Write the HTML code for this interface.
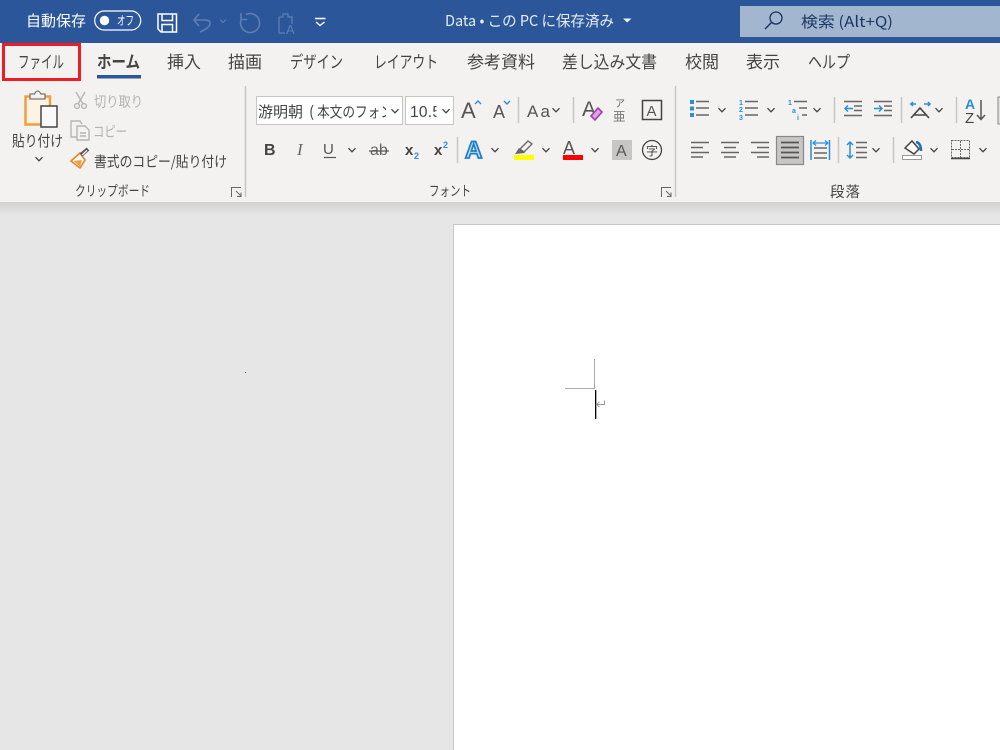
<!DOCTYPE html>
<html lang="ja"><head><meta charset="utf-8"><title>Word</title>
<style>
html,body{margin:0;padding:0;width:1000px;height:750px;overflow:hidden;background:#e6e6e6}
svg{display:block}
text{font-family:"Liberation Sans","Noto Sans CJK JP",sans-serif;fill:#444}
.j{font-family:"Noto Sans CJK JP","Liberation Sans",sans-serif}
.sep{stroke:#c8c6c4;stroke-width:1.5}
</style></head><body>
<svg width="1000" height="750" viewBox="0 0 1000 750" xmlns="http://www.w3.org/2000/svg">
<defs>
<linearGradient id="sh" x1="0" y1="0" x2="0" y2="1"><stop offset="0" stop-color="#d2d1cf"/><stop offset="1" stop-color="#e6e6e6"/></linearGradient>
<path id="ch" d="M-3.5 -1.8L0 1.8L3.5 -1.8" fill="none" stroke="#444" stroke-width="1.3"/>
<clipPath id="fc"><rect x="257" y="97" width="129" height="27"/></clipPath>
</defs>
<rect width="1000" height="750" fill="#e6e6e6"/>
<!-- title bar -->
<rect width="1000" height="43" fill="#2b579a"/>
<text class="j" x="26" y="26" font-size="15" textLength="60" lengthAdjust="spacingAndGlyphs" style="fill:#fff">自動保存</text>
<rect x="94.700" y="11" width="46" height="19" rx="9.500" fill="none" stroke="#fff" stroke-width="1.200"/>
<circle cx="104.500" cy="20.500" r="4.700" fill="#fff"/>
<text class="j" x="117" y="25" font-size="12.500" textLength="17" lengthAdjust="spacingAndGlyphs" style="fill:#fff">オフ</text>
<g fill="none" stroke="#fff" stroke-width="1.500"><path d="M158 14H176.500V32H161L158 29Z"/><path d="M162 14V20.500H172.500V14"/><path d="M162 32V24.500H172.500V32"/></g>
<g fill="none" stroke="#5e7fb0" stroke-width="1.600"><path d="M199 14L194 20L199 26M194 20H203C212 19 214 26 200 32"/><path d="M220 19.500L223 22.500L226 19.500" stroke-width="1.200"/><path d="M246 14.500A9.500 9.500 0 1 1 241.500 19M241 13V19.500H247"/><path d="M279 17H283V14H288V17H292V24M279 17V33H285" stroke-width="1.300"/></g>
<text x="286" y="34" font-size="13" style="fill:#5e7fb0">A</text>
<g fill="none" stroke="#fff" stroke-width="1.400"><path d="M315 18.500H325.500M316 22L320 25.500L324.500 22"/></g>
<text class="j" x="445" y="26" font-size="15" textLength="169" lengthAdjust="spacingAndGlyphs" style="fill:#e6ecf5">Data • この PC に保存済み</text>
<path d="M623 18.500H631.500L627.200 22.500Z" fill="#eef2f8"/>
<rect x="740" y="6" width="260" height="31" fill="#a2b6d0"/>
<circle cx="776" cy="18" r="6" fill="none" stroke="#17335f" stroke-width="1.300"/><path d="M771.500 22.500L765 29" stroke="#17335f" stroke-width="1.400"/>
<text class="j" x="801" y="27" font-size="15" textLength="92" lengthAdjust="spacingAndGlyphs" style="fill:#1c3864">検索 (Alt+Q)</text>
<!-- ribbon -->
<rect y="43" width="1000" height="159" fill="#f3f2f1"/>
<rect y="202" width="1000" height="13" fill="url(#sh)"/>
<g font-size="17">
<text class="j" x="18" y="68" textLength="46" lengthAdjust="spacingAndGlyphs">ファイル</text>
<text class="j" x="97" y="68" font-weight="700" textLength="43" lengthAdjust="spacingAndGlyphs">ホーム</text>
<text class="j" x="167" y="68" textLength="34" lengthAdjust="spacingAndGlyphs">挿入</text>
<text class="j" x="228" y="68" textLength="34" lengthAdjust="spacingAndGlyphs">描画</text>
<text class="j" x="290" y="68" textLength="53" lengthAdjust="spacingAndGlyphs">デザイン</text>
<text class="j" x="374" y="68" textLength="64" lengthAdjust="spacingAndGlyphs">レイアウト</text>
<text class="j" x="467" y="68" textLength="68" lengthAdjust="spacingAndGlyphs">参考資料</text>
<text class="j" x="562" y="68" textLength="95" lengthAdjust="spacingAndGlyphs">差し込み文書</text>
<text class="j" x="685" y="68" textLength="34" lengthAdjust="spacingAndGlyphs">校閲</text>
<text class="j" x="746" y="68" textLength="34" lengthAdjust="spacingAndGlyphs">表示</text>
<text class="j" x="808" y="68" textLength="42" lengthAdjust="spacingAndGlyphs">ヘルプ</text>
</g>
<rect x="97" y="75" width="44" height="3.500" fill="#2b579a"/>
<rect x="3.500" y="44.500" width="76" height="35" fill="none" stroke="#ee1c25" stroke-width="3"/>
<!-- clipboard group -->
<rect x="25.500" y="96.500" width="24.500" height="28" fill="#fdf3e3" stroke="#ef9f3d" stroke-width="2.500"/>
<path d="M30 99V94H34.500Q37.500 88 41 94H45V99Z" fill="#f3f2f1" stroke="#777" stroke-width="1.300"/>
<rect x="41" y="106" width="16" height="21" fill="#f9f9f9" stroke="#444" stroke-width="1.500"/>
<text class="j" x="12" y="146" font-size="15" textLength="51" lengthAdjust="spacingAndGlyphs">貼り付け</text>
<use href="#ch" x="39" y="159"/>
<g fill="none" stroke="#b5b5b5" stroke-width="1.400"><path d="M76 92L83 104M85 92L78 104"/><circle cx="77" cy="106" r="2.400"/><circle cx="84" cy="106" r="2.400"/>
<path d="M77 137H71V121H80L82 124"/><path d="M77 126H85L89 130V140H77Z"/><path d="M80 133H86M80 136H86"/></g>
<text class="j" x="94" y="107" font-size="14.500" textLength="49" lengthAdjust="spacingAndGlyphs" style="fill:#b3b3b3">切り取り</text>
<text class="j" x="93" y="137" font-size="14.500" textLength="34" lengthAdjust="spacingAndGlyphs" style="fill:#b3b3b3">コピー</text>
<path d="M71 161L80 153L85 160L80 168Z" fill="#fff" stroke="#e8821e" stroke-width="1.600"/>
<path d="M73.500 161L82 160L80 166.500Z" fill="#ef9f3d"/>
<path d="M81 155L88 149" stroke="#555" stroke-width="4"/><path d="M82 155L87 150.500" stroke="#eee" stroke-width="1.400"/>
<text class="j" x="94" y="167" font-size="14.500" textLength="133" lengthAdjust="spacingAndGlyphs">書式のコピー/貼り付け</text>
<text class="j" x="75" y="196" font-size="14" textLength="75" lengthAdjust="spacingAndGlyphs">クリップボード</text>
<path d="M231.500 197V187.500H241M236 191L241 196M241 192.500V196.500H237" fill="none" stroke="#666" stroke-width="1"/>
<line class="sep" x1="245.500" y1="86" x2="245.500" y2="197"/>
<!-- font group -->
<rect x="256.500" y="96.500" width="146" height="28" fill="#fff" stroke="#c8c6c4"/>
<g clip-path="url(#fc)"><text class="j" x="258" y="117" font-size="15" textLength="45">游明朝</text><text class="j" x="309" y="117" font-size="15">(</text><text class="j" x="317" y="117" font-size="15" textLength="76" lengthAdjust="spacingAndGlyphs">本文のフォン</text></g>
<use href="#ch" x="395" y="111"/>
<rect x="405.500" y="96.500" width="48" height="28" fill="#fff" stroke="#c8c6c4"/>
<text x="410" y="117" font-size="15.500" textLength="31">10.5</text>
<rect x="436.500" y="98" width="5" height="25" fill="#fff"/>
<use href="#ch" x="446" y="111"/>
<text x="461" y="118" font-size="22" style="fill:#555">A</text><path d="M475 104L478 101L481 104" stroke="#2b8fd8" stroke-width="1.400" fill="none"/>
<text x="493" y="118" font-size="18" style="fill:#555">A</text><path d="M504 101L507 104L510 101" stroke="#2b8fd8" stroke-width="1.400" fill="none"/>
<line class="sep" x1="518.500" y1="97" x2="518.500" y2="123"/>
<text x="527" y="117" font-size="17" textLength="23" style="fill:#555">Aa</text><use href="#ch" x="556" y="110"/>
<line class="sep" x1="573.500" y1="97" x2="573.500" y2="123"/>
<text x="582" y="116" font-size="21" style="fill:#555">A</text>
<path d="M591 116L598 108L602 112L595 120Z" fill="#d9a7de" stroke="#a23bb0" stroke-width="1.600"/>
<text class="j" x="615" y="107" font-size="10" style="fill:#666">ア</text>
<text class="j" x="613" y="121" font-size="12.500" style="fill:#777">亜</text>
<rect x="642.500" y="100.500" width="19" height="19" fill="none" stroke="#444" stroke-width="1.500"/>
<text x="646.500" y="116" font-size="15" style="fill:#555">A</text>
<text x="264" y="155" font-size="16" font-weight="700">B</text>
<text x="297" y="155" font-size="17" font-style="italic" style="font-family:'Liberation Serif',serif;fill:#666">I</text>
<text x="323" y="154" font-size="15" style="fill:#555">U</text><line x1="324" y1="157.500" x2="336" y2="157.500" stroke="#555" stroke-width="1.200"/>
<use href="#ch" x="352" y="150"/>
<text x="370" y="155" font-size="16" style="fill:#666">ab</text><line x1="369" y1="151" x2="389" y2="151" stroke="#555" stroke-width="1.200"/>
<text x="405" y="155" font-size="15" font-weight="700">x</text><text x="414" y="159" font-size="9" font-weight="700" style="fill:#2b8fd8">2</text>
<text x="434" y="155" font-size="15" font-weight="700">x</text><text x="443" y="148" font-size="9" font-weight="700" style="fill:#2b8fd8">2</text>
<line class="sep" x1="457.500" y1="137" x2="457.500" y2="163"/>
<text x="465" y="158" font-size="24" font-weight="700" style="fill:#cfe5f6;stroke:#1f7fc8;stroke-width:1.800">A</text>
<use href="#ch" x="495" y="150"/>
<path d="M520 149L528 141L532 144L524 152Z" fill="#f3f2f1" stroke="#666" stroke-width="1.300"/><path d="M515 154L519 148L525 153Z" fill="#666"/>
<rect x="514" y="155" width="20" height="5" fill="#ff0"/><use href="#ch" x="546" y="150"/>
<text x="563" y="154" font-size="18" style="fill:#555">A</text><rect x="563" y="155" width="20" height="5" fill="#f00"/><use href="#ch" x="595" y="150"/>
<rect x="612" y="140" width="20" height="20" fill="#c8c6c4"/><text x="616" y="156" font-size="16" style="fill:#555">A</text>
<circle cx="652" cy="150" r="9.500" fill="none" stroke="#444" stroke-width="1.300"/><text class="j" x="646" y="155" font-size="12">字</text>
<text class="j" x="429" y="196" font-size="14" textLength="42" lengthAdjust="spacingAndGlyphs">フォント</text>
<path d="M661.500 197V187.500H671M666 191L671 196M671 192.500V196.500H667" fill="none" stroke="#666" stroke-width="1"/>
<line class="sep" x1="675.500" y1="86" x2="675.500" y2="197"/>
<!-- paragraph group -->
<g fill="#2b8fd8"><rect x="690" y="100" width="4" height="4"/><rect x="690" y="106.500" width="4" height="4"/><rect x="690" y="113" width="4" height="4"/></g>
<path d="M696 101.500H709M696 108H709M696 115H709" stroke="#666" stroke-width="1.600"/><use href="#ch" x="722" y="110"/>
<g font-size="7" font-weight="700"><text x="739" y="105" style="fill:#2b8fd8">1</text><text x="739" y="112" style="fill:#2b8fd8">2</text><text x="739" y="120" style="fill:#2b8fd8">3</text></g>
<path d="M745 101.500H758M745 108H758M745 115H758" stroke="#666" stroke-width="1.600"/><use href="#ch" x="771" y="110"/>
<g font-size="7" font-weight="700"><text x="788" y="105" style="fill:#2b8fd8">1</text><text x="792" y="113" style="fill:#2b8fd8">a</text><text x="797" y="120" style="fill:#2b8fd8">i</text></g>
<path d="M794 101.500H807M799 108H807M802 115H807" stroke="#666" stroke-width="1.600"/><use href="#ch" x="817" y="110"/>
<line class="sep" x1="834.500" y1="97" x2="834.500" y2="123"/>
<path d="M844 101.500H862M854 106H862M854 110.500H862M844 115.500H862" stroke="#666" stroke-width="1.500"/><path d="M853 108.500H845M848 105.500L845 108.500L848 111.500" stroke="#2b8fd8" stroke-width="1.500" fill="none"/>
<path d="M874 101.500H892M884 106H892M884 110.500H892M874 115.500H892" stroke="#666" stroke-width="1.500"/><path d="M874 108.500H882M879 105.500L882 108.500L879 111.500" stroke="#2b8fd8" stroke-width="1.500" fill="none"/>
<line class="sep" x1="901.500" y1="97" x2="901.500" y2="123"/>
<path d="M910 104H916M913 102L911 104L913 106M924 104H930M928 102L930 104L928 106" stroke="#2b8fd8" stroke-width="1.500" fill="none"/>
<path d="M911 118L920 108L929 118M914 115H926" stroke="#444" stroke-width="1.600" fill="none"/><use href="#ch" x="939" y="110"/>
<line class="sep" x1="956.500" y1="97" x2="956.500" y2="123"/>
<text x="965" y="109" font-size="14" font-weight="700" style="fill:#2b8fd8">A</text><text x="965" y="123" font-size="15" style="fill:#444">Z</text>
<path d="M981 100V119M977 115L981 119.500L985 115" stroke="#555" stroke-width="1.500" fill="none"/>
<rect x="998" y="97" width="3" height="27" fill="#e1e0df" stroke="#8a8886" stroke-width="1"/>
<path d="M691 142.500H709M691 147.500H703M691 152.500H709M691 157H703" stroke="#666" stroke-width="1.500"/>
<path d="M721 142.500H739M724 147.500H736M721 152.500H739M724 157H736" stroke="#666" stroke-width="1.500"/>
<path d="M751 142.500H769M757 147.500H769M751 152.500H769M757 157H769" stroke="#666" stroke-width="1.500"/>
<rect x="776.500" y="136.500" width="27" height="28" fill="#c8c6c4" stroke="#8a8886" stroke-width="1.200"/>
<path d="M781 142.500H799M781 147.500H799M781 152.500H799M781 157.500H799" stroke="#555" stroke-width="1.700"/>
<path d="M811 140V160M829.500 140V160" stroke="#2b8fd8" stroke-width="1.500"/><path d="M813 143H828M816 140.500L813 143L816 145.500M825 140.500L828 143L825 145.500" stroke="#2b8fd8" stroke-width="1.200" fill="none"/>
<path d="M814 148H827M814 153H827M814 158H827" stroke="#666" stroke-width="1.500"/>
<line class="sep" x1="838.500" y1="137" x2="838.500" y2="163"/>
<path d="M850 142V158M847 145L850 142L853 145M847 155L850 158L853 155" stroke="#2b8fd8" stroke-width="1.500" fill="none"/>
<path d="M856 142.500H867M856 147.500H867M856 152.500H867M856 157.500H867" stroke="#666" stroke-width="1.500"/><use href="#ch" x="876" y="150"/>
<line class="sep" x1="893.500" y1="137" x2="893.500" y2="163"/>
<path d="M905 148L912 141L919 149L914 154Z" fill="#fff" stroke="#444" stroke-width="1.500"/><path d="M916 142Q921 143 921 151" stroke="#1f6fb5" stroke-width="2.500" fill="none"/>
<rect x="902.500" y="155.500" width="19" height="4" fill="#fff" stroke="#999"/><use href="#ch" x="934" y="150"/>
<g fill="none" stroke="#666" stroke-width="1" stroke-dasharray="2 1"><rect x="951.500" y="140.500" width="18" height="17"/><path d="M960.500 141V158M952 149.500H970"/></g>
<line x1="951" y1="158.500" x2="970" y2="158.500" stroke="#444" stroke-width="1.500"/><use href="#ch" x="983" y="150"/>
<text class="j" x="830" y="197" font-size="14.500" textLength="30">段落</text>
<!-- document -->
<rect x="245" y="372" width="1" height="1" fill="#555"/>
<rect x="453.500" y="224.500" width="560" height="540" fill="#fff" stroke="#c6c6c6"/>
<path d="M594.500 359V388.500H565" fill="none" stroke="#ababab"/>
<rect x="595" y="390" width="1.300" height="29" fill="#000"/>
<path d="M604.500 400.500V404.500H597M599.500 402L596.500 404.500L599.500 407" fill="none" stroke="#999" stroke-width="1"/>
</svg>
</body></html>
